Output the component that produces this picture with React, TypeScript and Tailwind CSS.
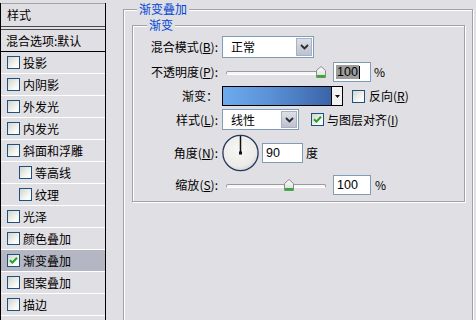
import React from "react";

const layerStyles = [
  { label: "投影" },
  { label: "内阴影" },
  { label: "外发光" },
  { label: "内发光" },
  { label: "斜面和浮雕" },
  { label: "等高线", sub: true },
  { label: "纹理", sub: true },
  { label: "光泽" },
  { label: "颜色叠加" },
  { label: "渐变叠加", checked: true },
  { label: "图案叠加" },
  { label: "描边" },
  { label: "" },
];

function Check({ checked = false }: { checked?: boolean }) {
  return (
    <span className="flex h-[13px] w-[13px] shrink-0 items-center justify-center border border-[#1c5180] bg-[linear-gradient(135deg,#d4d4cd,#fbfbf9_75%)]">
      {checked && (
        <svg width="9" height="9" viewBox="0 0 9 9">
          <path d="M1 4.2 L3.4 6.6 L8 1.8" fill="none" stroke="#21a121" strokeWidth="2" />
        </svg>
      )}
    </span>
  );
}

function Acc({ text, k }: { text: string; k: string }) {
  return (
    <>
      {text}(<span className="underline underline-offset-[1px]">{k}</span>):
    </>
  );
}

function Combo({ value, w, h }: { value: string; w: string; h: string }) {
  return (
    <div className={`flex items-stretch border border-[#7f9db9] bg-white ${w} ${h}`}>
      <span className="flex flex-1 items-center pl-[8px]">{value}</span>
      <span className="m-px flex w-[16px] items-center justify-center border border-[#a9b0c2] bg-[linear-gradient(#dde0e8,#bcc1cf)]">
        <svg width="9" height="6" viewBox="0 0 9 6">
          <path d="M1 1 L4.5 4.5 L8 1" fill="none" stroke="#2b2b2b" strokeWidth="1.8" />
        </svg>
      </span>
    </div>
  );
}

function Slider({ value, max }: { value: number; max: number }) {
  const left = 4 + Math.round((value / max) * 95);
  return (
    <div className="relative h-[20px] w-[108px]">
      <div className="absolute top-[9px] right-[4px] left-[4px] h-[4px] rounded-full border border-[#9b9b9b] border-b-white bg-[#f6f6f6]" />
      <svg className="absolute top-[4px]" style={{ left: left - 5 }} width="10" height="12" viewBox="0 0 10 12">
        <defs>
          <linearGradient id="thumb" x1="0" y1="0" x2="0" y2="1">
            <stop offset="0" stopColor="#ffffff" />
            <stop offset="1" stopColor="#d9d9d9" />
          </linearGradient>
        </defs>
        <path d="M0.5 4.5 L5 0.5 L9.5 4.5 V11.5 H0.5 Z" fill="url(#thumb)" stroke="#8c8c8c" />
        <rect x="1" y="9" width="8" height="2.5" fill="#2fae2f" />
      </svg>
    </div>
  );
}

function Field({ children, w, h }: { children: React.ReactNode; w: string; h: string }) {
  return (
    <div className={`flex items-center border border-[#7f9db9] bg-white pl-[2px] font-['Liberation_Sans',sans-serif] text-[12.5px] ${w} ${h}`}>
      {children}
    </div>
  );
}

function Dial() {
  return (
    <svg width="37" height="38" viewBox="0 0 37 38">
      <defs>
        <radialGradient id="dial" cx="0.45" cy="0.4" r="0.6">
          <stop offset="0" stopColor="#f7f7f5" />
          <stop offset="0.8" stopColor="#ecebe8" />
          <stop offset="1" stopColor="#d4d6dc" />
        </radialGradient>
      </defs>
      <circle cx="18.5" cy="19" r="17.6" fill="url(#dial)" stroke="#25365a" strokeWidth="1.3" />
      <line x1="18.5" y1="19" x2="18.5" y2="2" stroke="#111" strokeWidth="1.5" />
      <rect x="17" y="17.5" width="3" height="3" fill="#111" />
    </svg>
  );
}

export default function App() {
  return (
    <div className="flex h-[320px] w-[476px] overflow-hidden bg-[#e0dfe3] font-['Noto_Sans_CJK_SC',sans-serif] text-[12px] leading-[14px] text-black">
      <div className="mt-[3px] flex w-[106px] shrink-0 flex-col border-x border-black">
        <div className="flex h-[23px] shrink-0 items-center border-t border-[#a3a3a3] pl-[6px]">样式</div>
        <div className="h-[4px] shrink-0 border-y border-[#4a4a4a]" />
        <div className="flex h-[22px] shrink-0 items-center border-b border-black pl-[5px]">混合选项:默认</div>
        {layerStyles.map((s, i) => (
          <div
            key={i}
            className={`flex h-[22px] shrink-0 items-center gap-[3px] border-b border-white ${
              s.sub ? "pl-[18px]" : "pl-[6px]"
            } ${s.checked ? "bg-[#b4b6c3]" : ""}`}
          >
            {s.label && <Check checked={s.checked} />}
            <span>{s.label}</span>
          </div>
        ))}
      </div>

      <div className="flex-1 pr-[3px] pl-[17px]">
        <fieldset className="mt-[2px] h-[340px] border border-[#a0a0a6] [box-shadow:inset_1px_1px_0_#fff,1px_1px_0_#fff]">
          <legend className="ml-[13px] bg-[#e0dfe3] px-[2px] text-[#0046d5]">渐变叠加</legend>
          <fieldset className="mt-[2px] mr-[7px] ml-[8px] border border-[#a0a0a6] pb-[6px] [box-shadow:inset_1px_1px_0_#fff,1px_1px_0_#fff]">
            <legend className="ml-[14px] bg-[#e0dfe3] px-[2px] text-[#0046d5]">渐变</legend>

            <div className="mt-[4px] flex h-[22px] items-center">
              <span className="w-[85px] text-right">
                <Acc text="混合模式" k="B" />
              </span>
              <div className="ml-[4px]">
                <Combo value="正常" w="w-[92px]" h="h-[22px]" />
              </div>
            </div>

            <div className="mt-[4px] flex h-[20px] items-center">
              <span className="w-[85px] text-right">
                <Acc text="不透明度" k="P" />
              </span>
              <div className="ml-[4px]">
                <Slider value={100} max={100} />
              </div>
              <div className="ml-[3px]">
                <Field w="w-[38px]" h="h-[20px]">
                  <span className="bg-[#9d9d9d] px-px">100</span>
                  <span className="h-[13px] w-px bg-black" />
                </Field>
              </div>
              <span className="ml-[3px]">%</span>
            </div>

            <div className="mt-[4px] flex h-[20px] items-center">
              <span className="w-[85px] text-right">渐变：</span>
              <div className="ml-[4px] flex h-[20px]">
                <div className="w-[110px] border border-black bg-[linear-gradient(to_right,#6eaaee,#5a90d6_45%,#3a64a8)]" />
                <div className="flex w-[11px] items-center justify-center border border-l-0 border-black bg-[#f2f2f2]">
                  <svg width="5" height="3" viewBox="0 0 5 3">
                    <path d="M0 0 H5 L2.5 3 Z" fill="#111" />
                  </svg>
                </div>
              </div>
              <div className="ml-[9px]">
                <Check />
              </div>
              <span className="ml-[4px]">
                反向(<span className="underline underline-offset-[1px]">R</span>)
              </span>
            </div>

            <div className="mt-[3px] flex h-[21px] items-center">
              <span className="w-[85px] text-right">
                <Acc text="样式" k="L" />
              </span>
              <div className="ml-[4px]">
                <Combo value="线性" w="w-[77px]" h="h-[21px]" />
              </div>
              <div className="ml-[12px]">
                <Check checked />
              </div>
              <span className="ml-[3px]">
                与图层对齐(<span className="underline underline-offset-[1px]">I</span>)
              </span>
            </div>

            <div className="mt-[4px] flex h-[38px] items-center">
              <span className="w-[85px] text-right">
                <Acc text="角度" k="N" />
              </span>
              <div className="ml-[4px] flex">
                <Dial />
              </div>
              <div className="ml-[3px]">
                <Field w="w-[41px]" h="h-[20px]">
                  <span className="px-px">90</span>
                </Field>
              </div>
              <span className="ml-[3px]">度</span>
            </div>

            <div className="mt-[3px] flex h-[20px] items-center">
              <span className="w-[85px] text-right">
                <Acc text="缩放" k="S" />
              </span>
              <div className="ml-[4px]">
                <Slider value={100} max={150} />
              </div>
              <div className="ml-[3px]">
                <Field w="w-[38px]" h="h-[20px]">
                  <span className="px-px">100</span>
                </Field>
              </div>
              <span className="ml-[4px]">%</span>
            </div>
          </fieldset>
        </fieldset>
      </div>
    </div>
  );
}
